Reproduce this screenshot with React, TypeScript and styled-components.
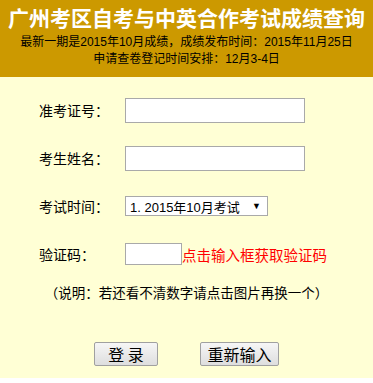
import React from 'react';
import styled, { createGlobalStyle } from 'styled-components';

const GlobalStyle = createGlobalStyle`
  html, body {
    margin: 0;
    padding: 0;
    background: #ffffff;
  }
  body {
    font-family: "Liberation Sans", "Noto Sans CJK SC", sans-serif;
  }
`;

const Root = styled.div`
  width: 373px;
`;

const Header = styled.div`
  background-color: #cc9900;
  height: 77px;
  box-sizing: border-box;
  padding-top: 6px;
  text-align: center;
`;

const Title = styled.div`
  font-size: 21px;
  line-height: 26px;
  font-weight: bold;
  color: #ffffff;
  margin-bottom: 2px;
`;

const SubLine = styled.div`
  font-size: 12px;
  line-height: 17px;
  color: #000000;
`;

const Body = styled.div`
  background-color: #ffffd5;
  height: 301px;
  box-sizing: border-box;
  padding-top: 9px;
`;

const Form = styled.div`
  display: grid;
  grid-template-columns: 86px auto;
  grid-auto-rows: 48px;
  align-items: center;
  padding-left: 39px;
`;

const Label = styled.div`
  font-size: 14px;
  color: #000;
`;

const Field = styled.div`
  display: flex;
  align-items: center;
`;

const TextInput = styled.input<{ $w: number; $h: number }>`
  width: ${p => p.$w}px;
  height: ${p => p.$h}px;
  box-sizing: border-box;
  border: 1px solid #a9a9a9;
  background: #fff;
  margin: 0;
  padding: 0 3px;
  outline: none;
`;

const Select = styled.div`
  width: 143px;
  height: 20px;
  box-sizing: border-box;
  border: 1px solid #a9a9a9;
  background: #fff;
  display: flex;
  align-items: center;
  justify-content: space-between;
  padding: 0 6px 0 4px;
  font-size: 13px;
  color: #000;
`;

const Arrow = styled.span`
  font-size: 9px;
`;

const Hint = styled.span`
  color: #ff0000;
  font-size: 14.5px;
`;

const Note = styled.div`
  margin-top: 5px;
  text-align: center;
  font-size: 13.5px;
  line-height: 22px;
  color: #000;
`;

const Buttons = styled.div`
  display: flex;
  justify-content: center;
  gap: 42px;
  margin-top: 37px;
`;

const Button = styled.button<{ $w: number }>`
  width: ${p => p.$w}px;
  height: 24px;
  box-sizing: border-box;
  border: 1px solid #a0a0a0;
  border-radius: 2px;
  background: linear-gradient(#f6f6f6, #dedede);
  font-family: "Noto Sans CJK SC", sans-serif;
  font-size: 16px;
  line-height: 20px;
  padding: 0;
  color: #000;
  white-space: pre;
`;

const App = () => {
  return (
    <Root>
      <GlobalStyle />
      <Header>
        <Title>广州考区自考与中英合作考试成绩查询</Title>
        <SubLine>最新一期是2015年10月成绩，成绩发布时间：2015年11月25日</SubLine>
        <SubLine>申请查卷登记时间安排：12月3-4日</SubLine>
      </Header>
      <Body>
        <Form>
          <Label>准考证号：</Label>
          <Field>
            <TextInput $w={180} $h={25} />
          </Field>
          <Label>考生姓名：</Label>
          <Field>
            <TextInput $w={180} $h={25} />
          </Field>
          <Label>考试时间：</Label>
          <Field>
            <Select>
              <span>1. 2015年10月考试</span>
              <Arrow>▼</Arrow>
            </Select>
          </Field>
          <Label>验证码：</Label>
          <Field>
            <TextInput $w={57} $h={22} />
            <Hint>点击输入框获取验证码</Hint>
          </Field>
        </Form>
        <Note>（说明：若还看不清数字请点击图片再换一个）</Note>
        <Buttons>
          <Button $w={64}>{'登 录'}</Button>
          <Button $w={79}>重新输入</Button>
        </Buttons>
      </Body>
    </Root>
  );
};

export default App;
